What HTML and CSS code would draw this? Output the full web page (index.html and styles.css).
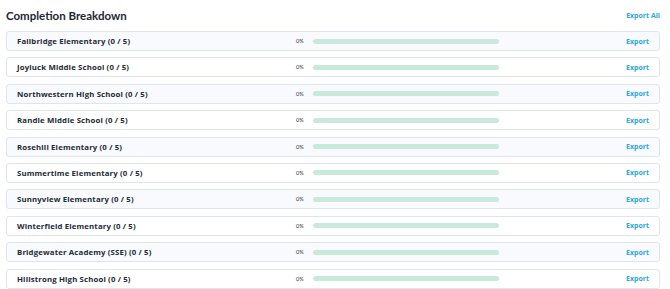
FILE: index.html
```html
<!DOCTYPE html>
<html lang="en">
<head>
  <meta charset="UTF-8" />
  <title>Completion Breakdown</title>
  <link rel="stylesheet" href="styles.css">
</head>
<body>
  <div class="panel">
    <div class="panel-head">
      <h2>Completion Breakdown</h2>
      <a href="#" class="export-all">Export All</a>
    </div>

    <ul class="schools">
      <li class="school">
        <span class="name">Fallbridge Elementary (0 / 5)</span>
        <span class="progress"><span class="pct">0%</span><span class="bar"><span class="fill" style="width: 0%"></span></span></span>
        <a href="#" class="export">Export</a>
      </li>
      <li class="school">
        <span class="name">Joyluck Middle School (0 / 5)</span>
        <span class="progress"><span class="pct">0%</span><span class="bar"><span class="fill" style="width: 0%"></span></span></span>
        <a href="#" class="export">Export</a>
      </li>
      <li class="school">
        <span class="name">Northwestern High School (0 / 5)</span>
        <span class="progress"><span class="pct">0%</span><span class="bar"><span class="fill" style="width: 0%"></span></span></span>
        <a href="#" class="export">Export</a>
      </li>
      <li class="school">
        <span class="name">Randle Middle School (0 / 5)</span>
        <span class="progress"><span class="pct">0%</span><span class="bar"><span class="fill" style="width: 0%"></span></span></span>
        <a href="#" class="export">Export</a>
      </li>
      <li class="school">
        <span class="name">Rosehill Elementary (0 / 5)</span>
        <span class="progress"><span class="pct">0%</span><span class="bar"><span class="fill" style="width: 0%"></span></span></span>
        <a href="#" class="export">Export</a>
      </li>
      <li class="school">
        <span class="name">Summertime Elementary (0 / 5)</span>
        <span class="progress"><span class="pct">0%</span><span class="bar"><span class="fill" style="width: 0%"></span></span></span>
        <a href="#" class="export">Export</a>
      </li>
      <li class="school">
        <span class="name">Sunnyview Elementary (0 / 5)</span>
        <span class="progress"><span class="pct">0%</span><span class="bar"><span class="fill" style="width: 0%"></span></span></span>
        <a href="#" class="export">Export</a>
      </li>
      <li class="school">
        <span class="name">Winterfield Elementary (0 / 5)</span>
        <span class="progress"><span class="pct">0%</span><span class="bar"><span class="fill" style="width: 0%"></span></span></span>
        <a href="#" class="export">Export</a>
      </li>
      <li class="school">
        <span class="name">Bridgewater Academy (SSE) (0 / 5)</span>
        <span class="progress"><span class="pct">0%</span><span class="bar"><span class="fill" style="width: 0%"></span></span></span>
        <a href="#" class="export">Export</a>
      </li>
      <li class="school">
        <span class="name">Hillstrong High School (0 / 5)</span>
        <span class="progress"><span class="pct">0%</span><span class="bar"><span class="fill" style="width: 0%"></span></span></span>
        <a href="#" class="export">Export</a>
      </li>
    </ul>
  </div>
</body>
</html>
```

FILE: styles.css
```css
body {
  margin: 0;
  font-family: 'Lato', 'Open Sans', sans-serif;
  color: #1f2a36;
  background: #fff;
}
.panel {
  padding: 0 10px 0 6px;
}
.panel-head {
  display: flex;
  align-items: center;
  justify-content: space-between;
  height: 31px;
}
.panel-head h2 {
  margin: 0;
  font-size: 11.5px;
  font-weight: 700;
  color: #1d2733;
}
.export-all, .export {
  font-family: 'Open Sans', sans-serif;
  color: #2aa8dc;
  text-decoration: none;
  font-weight: 700;
  font-size: 7px;
}
.schools {
  list-style: none;
  margin: 0;
  padding: 0;
  display: flex;
  flex-direction: column;
  gap: 6.4px;
}
.school {
  display: grid;
  grid-template-columns: 279px 203px 1fr;
  align-items: center;
  height: 20px;
  box-sizing: border-box;
  padding: 0 10px;
  border: 1px solid #dfe5ec;
  border-radius: 3px;
  background: #fff;
}
.school:nth-child(odd) {
  background: #f8fafd;
}
.name {
  font-family: 'Open Sans', sans-serif;
  font-size: 7.8px;
  letter-spacing: 0.15px;
  font-weight: 700;
  color: #222b35;
}
.progress {
  display: flex;
  align-items: center;
}
.pct {
  width: 17px;
  font-size: 5.5px;
  color: #333;
}
.bar {
  width: 186px;
  height: 5px;
  border-radius: 3px;
  background: #c9e9da;
}
.fill {
  display: block;
  height: 100%;
  border-radius: 3px;
  background: #35b37e;
}
.export {
  justify-self: end;
}
```
